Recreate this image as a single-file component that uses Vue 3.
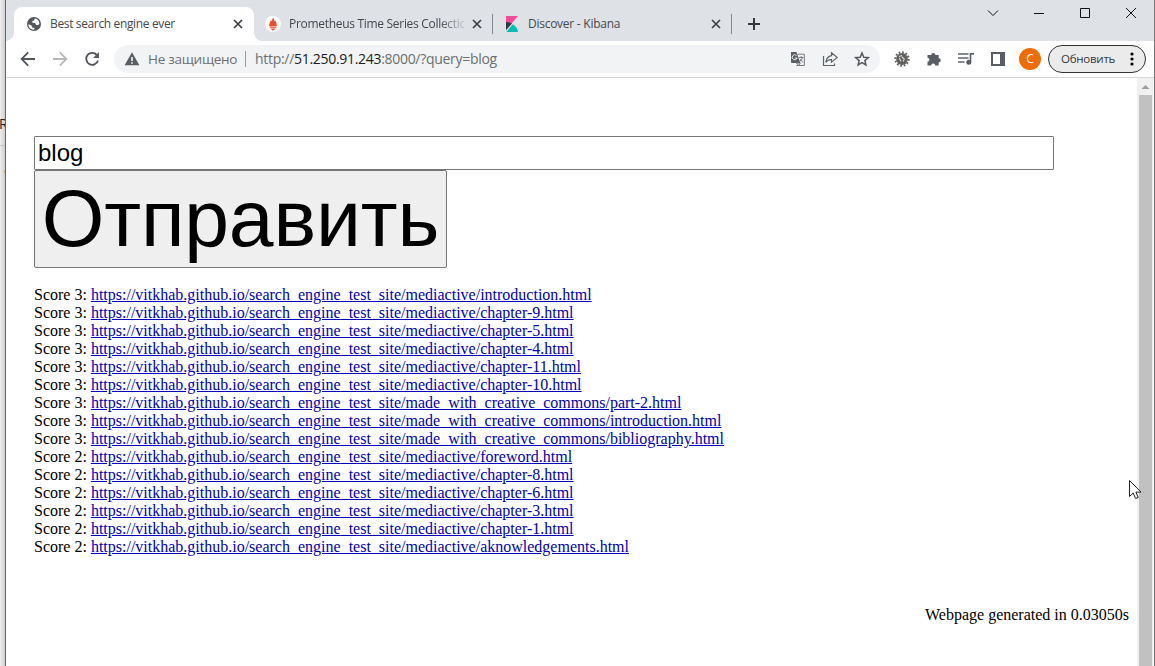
<script setup>
const media = 'https://vitkhab.github.io/search_engine_test_site/mediactive/'
const commons = 'https://vitkhab.github.io/search_engine_test_site/made_with_creative_commons/'
const results = [
  [3, media + 'introduction.html'],
  [3, media + 'chapter-9.html'],
  [3, media + 'chapter-5.html'],
  [3, media + 'chapter-4.html'],
  [3, media + 'chapter-11.html'],
  [3, media + 'chapter-10.html'],
  [3, commons + 'part-2.html'],
  [3, commons + 'introduction.html'],
  [3, commons + 'bibliography.html'],
  [2, media + 'foreword.html'],
  [2, media + 'chapter-8.html'],
  [2, media + 'chapter-6.html'],
  [2, media + 'chapter-3.html'],
  [2, media + 'chapter-1.html'],
  [2, media + 'aknowledgements.html'],
]
// Underscores get their own unbroken underline, so they are split out of the address.
const pieces = (url) => url.split(/(_)/)
</script>

<template>
  <div class="desktop">
    <div class="behind"><span class="behind-row">R</span><span class="behind-row second">a</span></div>
    <div class="window">
      <header class="tabs">
        <div class="tab active">
          <svg class="fav" width="16" height="16" viewBox="0 0 16 16"><circle cx="8" cy="8" r="7" fill="#54585d" /><path d="M2.4 8.3 5.6 9.6 6.3 11.4 8.5 12 8.3 13.7C5 14 2.2 11.6 2.4 8.3ZM8.8 2.4 8.3 4.3 6.3 5 6.4 6.7 9 6.9 10.3 8.9 12.2 9.1 13.4 7.9C13.5 5 11.5 2.7 8.8 2.4Z" fill="#fff" /></svg>
          <span class="title t1">Best search engine ever</span>
          <svg class="close" width="10" height="10" viewBox="0 0 10 10"><path d="M1 1 9 9M9 1 1 9" /></svg>
        </div>
        <div class="tab">
          <svg class="fav" width="16" height="16" viewBox="0 0 16 16"><circle cx="8" cy="8" r="8" fill="#fff" /><path d="M8 1.6C9 3 9.4 4 9.3 5.2L10.3 4.5C10.5 6 12 7 11.6 9L12.2 8.6C12.1 9.5 11.7 10.1 11.2 10.6H4.8C4.3 10.1 3.9 9.5 3.8 8.6L4.4 9C4 7 5.4 6 5.6 4.5L6.7 5.2C6.8 4 7.8 3 8 1.6ZM4.7 11.2H11.3V12.3H4.7ZM6 12.8H10C9.7 14 8.9 14.5 8 14.5S6.3 14 6 12.8Z" fill="#e6522c" /></svg>
          <span class="title t2">Prometheus Time Series Collectic</span>
          <svg class="close" width="10" height="10" viewBox="0 0 10 10"><path d="M1 1 9 9M9 1 1 9" /></svg>
        </div>
        <i class="sep"></i>
        <div class="tab third">
          <svg class="fav" width="16" height="16" viewBox="0 0 16 16"><path d="M2 0H14L2 14Z" fill="#f04e98" /><path d="M2 6C4.5 6 6.5 6.7 8 7.5L2 14Z" fill="#343741" /><path d="M8.7 8.2C11.7 9.8 13.7 12.7 14 16H2.4Z" fill="#00bfb3" /></svg>
          <span class="title t3">Discover - Kibana</span>
          <svg class="close" width="10" height="10" viewBox="0 0 10 10"><path d="M1 1 9 9M9 1 1 9" /></svg>
        </div>
        <i class="sep"></i>
        <svg class="plus" width="14" height="14" viewBox="0 0 14 14"><path d="M7 1V13M1 7H13" stroke="#35383d" stroke-width="2" /></svg>
        <div class="controls">
          <svg width="46" height="26" viewBox="0 0 46 26"><path d="M18 10.5 23 15.5 28 10.5" /></svg>
          <svg width="46" height="26" viewBox="0 0 46 26"><path d="M18 13.5H28" /></svg>
          <svg width="46" height="26" viewBox="0 0 46 26"><path d="M18.5 8.5H27.5V17.5H18.5Z" /></svg>
          <svg width="46" height="26" viewBox="0 0 46 26"><path d="M18 8 28 18M28 8 18 18" /></svg>
        </div>
      </header>

      <div class="toolbar">
        <svg class="slot" viewBox="0 0 32 36"><path d="M23 18H10M16.2 11.4 9.6 18 16.2 24.6" class="stroke" /></svg>
        <svg class="slot dim" viewBox="0 0 32 36"><path d="M9 18H22M15.8 11.4 22.4 18 15.8 24.6" class="stroke" /></svg>
        <svg class="slot" viewBox="0 0 32 36"><path d="M21.2 14.4A6 6 0 1 0 22 19.5" class="stroke" /><path d="M23 11V17H17Z" class="fill" /></svg>
        <div class="omnibox">
          <svg class="warn" width="16" height="16" viewBox="0 0 16 16"><path d="M8 1.2 15.4 14.3H.6Z" class="fill" /><path d="M8 6V10M8 11.2V12.8" stroke="#fff" stroke-width="1.5" /></svg>
          <span class="insecure">Не защищено</span>
          <i class="divider"></i>
          <span class="url">http://<b>51.250.91.243</b>:8000/?query=blog</span>
          <div class="actions">
            <svg class="slot" viewBox="0 0 32 36"><path d="M16 13.2H22.3V24.5H14.4" fill="none" stroke="#777b80" /><path d="M9 11H14.5L18.3 22H10Q9 22 9 21Z" class="fill" /><path d="M14.5 14.5A2.5 2.5 0 1 0 15.1 17H12.8" stroke="#f1f3f4" fill="none" /><path d="M17 16.5H21.5M19.2 15V16.5M20.5 16.5Q20 19 17.8 20.5M18 18 21 21.5M14.4 22 16.7 24.5 18.3 22Z" fill="none" stroke="#777b80" /></svg>
            <svg class="slot" viewBox="0 0 32 36"><path d="M9.5 15V24.5H20.5V22.5" fill="none" stroke="#5f6368" stroke-width="1.2" /><path d="M17.5 11.8 23.2 16.5 17.5 21.1V18.6Q13.7 18.4 11.8 21.3 12.5 15.6 17.5 14.6Z" fill="none" stroke="#5f6368" stroke-width="1.2" /></svg>
            <svg class="slot" viewBox="0 0 32 36"><path d="M16 12 17.8 16.2 22.3 16.6 18.9 19.6 19.9 24 16 21.7 12.1 24 13.1 19.6 9.7 16.6 14.2 16.2Z" fill="none" stroke="#55595e" stroke-width="1.5" /></svg>
          </div>
        </div>
        <svg class="slot ext" viewBox="0 0 32 36"><circle cx="16" cy="18" r="5.9" fill="#62615f" /><circle cx="16" cy="18" r="6.7" fill="none" stroke="#62615f" stroke-width="2" stroke-dasharray="1.7 1.8" /><path d="M13 15.5 16 14.6M13.3 17 15 20.3M16 16 18.3 18.2 17 20.5" fill="none" stroke="#ddd" stroke-width="1.1" /></svg>
        <svg class="slot" viewBox="0 0 32 36"><path d="M9.5 14H13.2A2.1 2.1 0 1 1 17.4 14H20.7V17.2A2.1 2.1 0 1 1 20.7 21.4V24.5H17.2A2 2 0 0 0 13.2 24.5H9.5V20.7A2 2 0 0 0 9.5 16.7Z" class="fill" /></svg>
        <svg class="slot" viewBox="0 0 32 36"><path d="M8 13H18.5M8 17H18.5M8 21H14.5M20.5 20.5V12.8H24" fill="none" stroke="#5f6368" stroke-width="1.7" /><circle cx="18.8" cy="21.3" r="2.5" class="fill" /></svg>
        <svg class="slot" viewBox="0 0 32 36"><path d="M9 11H23V25H9ZM11 13V23H18V13Z" class="fill" fill-rule="evenodd" /></svg>
        <div class="slot avatar-slot"><span class="avatar">C</span></div>
        <button class="update"><span>Обновить</span><svg width="4" height="14" viewBox="0 0 4 14"><circle cx="2" cy="2" r="1.6" /><circle cx="2" cy="7" r="1.6" /><circle cx="2" cy="12" r="1.6" /></svg></button>
      </div>

      <div class="viewport">
        <main class="page">
          <input class="query" type="text" value="blog" />
          <button class="submit">Отправить</button>
          <ul class="results">
            <li v-for="[score, url] in results" :key="url">Score {{ score }}: <a :href="url"><span v-for="(piece, i) in pieces(url)" :key="i" :class="{ underscore: piece === '_' }">{{ piece }}</span></a></li>
          </ul>
          <p class="timing">Webpage generated in 0.03050s</p>
        </main>
        <div class="scrollbar">
          <svg width="17" height="17" viewBox="0 0 17 17"><path d="M4.5 11 8.5 7 12.5 11Z" fill="#9b9b9b" /></svg>
          <div class="thumb"></div>
        </div>
      </div>
    </div>
    <svg class="cursor" width="13" height="20" viewBox="0 0 13 20"><path d="M.5.5V16.5L4.2 13 6.6 18.5 9.2 17.4 6.9 12.1H12Z" fill="#fff" stroke="#222" /></svg>
  </div>
</template>

<style>
body { overflow: hidden; }
</style>

<style scoped>
.desktop { position: relative; display: flex; width: 1155px; height: 666px; overflow: hidden; background: #fff; font-family: "Open Sans", "Noto Sans", sans-serif; }
.behind { width: 5px; flex: none; overflow: hidden; background: linear-gradient(90deg, #eee, #cfcfcf); padding-top: 115px; box-sizing: border-box; font: 14px/17px "Open Sans", sans-serif; color: #222; }
.behind-row { display: block; height: 30px; border-bottom: 1px solid #c4c4c4; text-indent: -1px; }
.behind-row.second { border: 0; padding-top: 14px; text-indent: 4px; color: #666; }
.window { display: flex; flex-direction: column; flex: 1; min-width: 0; border-left: 1px solid #666; border-right: 1px solid #777; }
.tabs { display: flex; height: 41px; flex: none; background: #dee1e6; padding-left: 8px; align-items: flex-start; }
.tab { position: relative; display: flex; align-items: center; width: 238px; height: 34px; margin-top: 7px; padding: 0 11px 0 11px; box-sizing: border-box; font-size: 12px; color: #45494e; flex: none; }
.tab.active { width: 240px; background: #fff; border-radius: 8px 8px 0 0; padding: 0 11px 0 12px; }
.tab.active::before, .tab.active::after { content: ""; position: absolute; bottom: 0; width: 8px; height: 8px; }
.tab.active::before { left: -8px; background: radial-gradient(circle at 0 0, transparent 7.5px, #fff 8px); }
.tab.active::after { right: -8px; background: radial-gradient(circle at 100% 0, transparent 7.5px, #fff 8px); }
.tab.third { padding-right: 10px; }
.fav { flex: none; margin-right: 8px; }
.title { flex: 1; min-width: 0; overflow: hidden; white-space: nowrap; line-height: 18px; }
.t1 { letter-spacing: -0.36px; }
.t2 { letter-spacing: -0.3px; flex: 0 0 175px; margin-right: 8px; -webkit-mask-image: linear-gradient(90deg, #000 150px, transparent 180px); mask-image: linear-gradient(90deg, #000 150px, transparent 180px); }
.t3 { letter-spacing: -0.26px; }
.close { flex: none; stroke: #3c4043; stroke-width: 1.7; }
.sep { width: 1px; height: 20px; margin-top: 14px; background: #868a90; flex: none; }
.plus { margin: 17px 0 0 15px; }
.controls { display: flex; margin-left: auto; }
.controls svg { fill: none; stroke: #111; stroke-width: 1; }
.toolbar { display: flex; height: 36px; flex: none; align-items: center; background: #fff; border-bottom: 1px solid #d5d7da; padding-left: 6px; }
.slot { width: 32px; height: 36px; flex: none; color: #50545a; }
.dim { color: #b7b9bc; }
.stroke { fill: none; stroke: currentColor; stroke-width: 1.8; }
.fill { fill: #5a5e63; }
.omnibox { display: flex; align-items: center; width: 766px; height: 28px; margin: 0 6px; border-radius: 14px; background: #f1f3f4; padding: 0 2px 0 10px; box-sizing: border-box; font-size: 14px; color: #6b6f74; white-space: nowrap; flex: none; }
.warn { margin-right: 8px; }
.insecure { width: 97px; letter-spacing: -0.27px; font-size: 13.5px; }
.divider { width: 1px; height: 16px; background: #9a9da1; margin-right: 9px; }
.url { letter-spacing: -0.3px; font-size: 14px; padding-bottom: 2px; }
.url b { font-weight: 400; color: #202124; }
.actions { display: flex; margin-left: auto; }
.avatar-slot { display: flex; align-items: center; justify-content: center; }
.avatar { width: 22px; height: 22px; border-radius: 50%; background: #ef6c00; color: #fff; font-size: 12px; line-height: 22px; text-align: center; }
.update { display: flex; align-items: center; justify-content: space-between; width: 98px; height: 28px; margin: 0 0 0 2px; padding: 0 11px 0 12px; border: 1px solid #333; border-radius: 14px; background: #ebebeb; color: #35383c; font: 11.5px "Open Sans", sans-serif; letter-spacing: -0.25px; box-sizing: border-box; }
.update span { padding-bottom: 1px; }
.viewport { display: flex; flex: 1; min-height: 0; }
.page { flex: 1; padding: 58px 8px 0 28px; font: 16px/18px "Liberation Serif", "Times New Roman", serif; color: #000; }
.query { display: block; width: 1020px; height: 34px; box-sizing: border-box; border: 1px solid #767676; border-radius: 1px; padding: 1px 3px; font: 24px "Liberation Sans", Arial, sans-serif; outline: none; color: #000; background: #fff; }
.submit { display: block; width: 413px; height: 98px; box-sizing: border-box; padding: 0 0 3px; border: 1px solid #767676; border-radius: 2px; background: #efefef; color: #000; font: 80.5px/92px "Liberation Sans", Arial, sans-serif; letter-spacing: -0.2px; white-space: nowrap; }
.results { list-style: none; margin: 18px 0 0; padding: 0; }
.results li { height: 18px; white-space: nowrap; }
.results a { color: #0000b4; text-decoration: underline; }
.underscore { text-decoration: underline; text-decoration-skip-ink: none; }
.timing { margin: 50px 0 0; text-align: right; }
.scrollbar { width: 17px; flex: none; background: #f1f1f1; }
.scrollbar svg { display: block; }
.thumb { width: 13px; height: 571px; margin: 0 auto; background: #c1c1c1; }
.cursor { position: absolute; left: 1129px; top: 480px; }
</style>
